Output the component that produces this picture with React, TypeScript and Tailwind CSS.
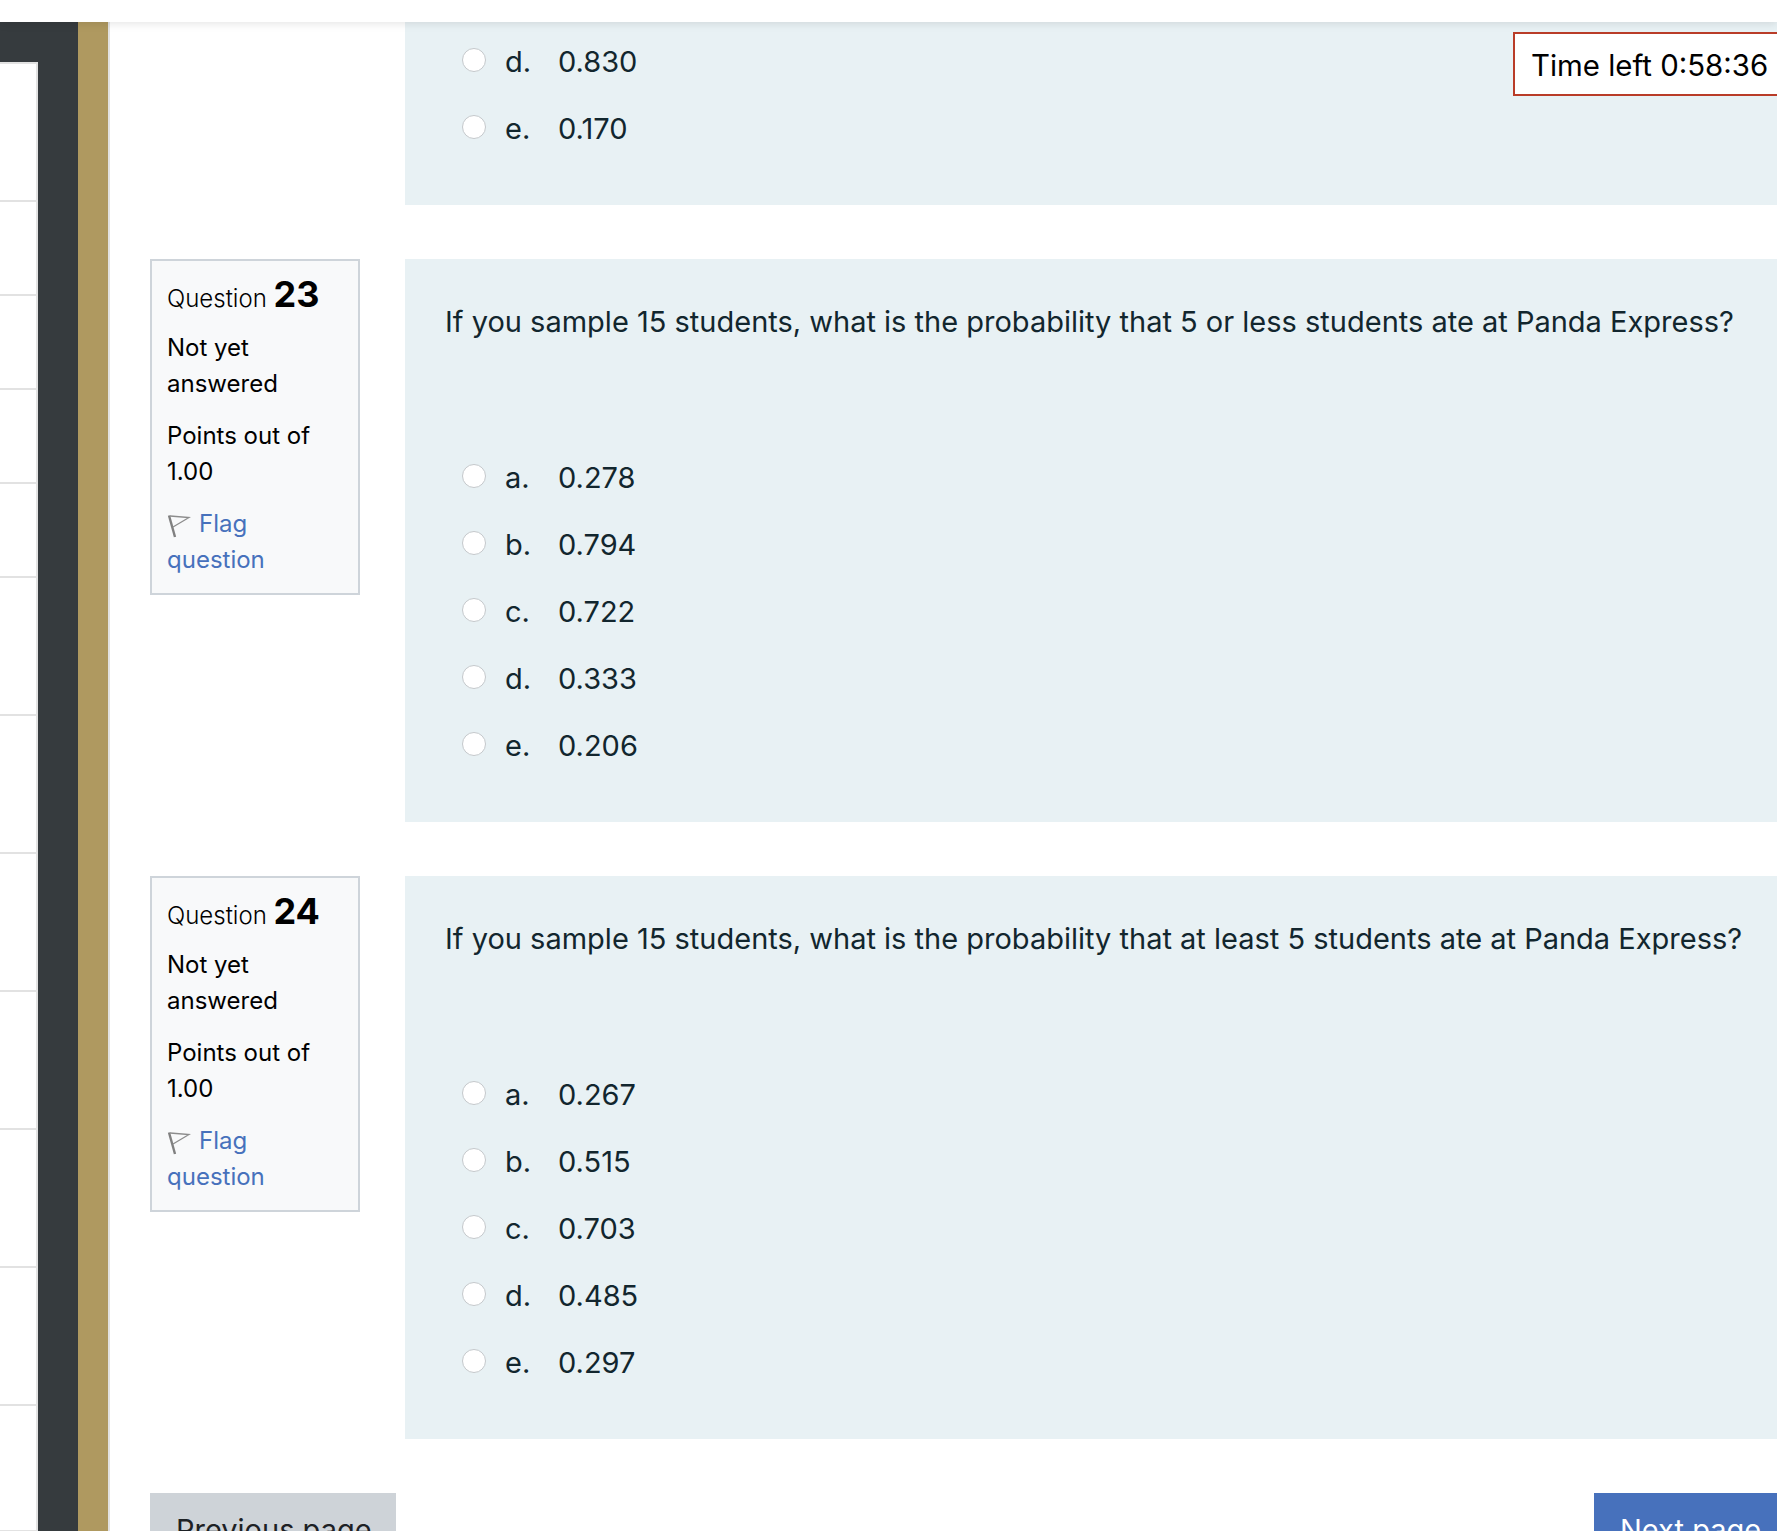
const sidebarRows = [138, 94, 94, 94, 94, 138, 138, 138, 138, 138, 138, 126];

const questions = [
  {
    number: 23,
    text: 'If you sample 15 students, what is the probability that 5 or less students ate at Panda Express?',
    answers: ['0.278', '0.794', '0.722', '0.333', '0.206'],
  },
  {
    number: 24,
    text: 'If you sample 15 students, what is the probability that at least 5 students ate at Panda Express?',
    answers: ['0.267', '0.515', '0.703', '0.485', '0.297'],
  },
];

const letters = ['a.', 'b.', 'c.', 'd.', 'e.'];

const FlagIcon = () => (
  <svg width="24" height="24" viewBox="0 0 24 24" fill="none" className="inline-block align-[-6px] mr-[8px]">
    <path d="M2 1.5 L8 23" stroke="#808080" strokeWidth="2.4" />
    <path d="M3 2 L22 3.5 L6 13" stroke="#8c8c8c" strokeWidth="1.3" />
  </svg>
);

const Answer = ({ letter, value }: { letter: string; value: string }) => (
  <div className="flex items-center h-[67px] pl-[57px]">
    <span className="w-[24px] h-[24px] rounded-full bg-white border border-[#c4c8cb] mb-[3px] shrink-0" />
    <span className="w-[53px] ml-[19px]">{letter}</span>
    <span>{value}</span>
  </div>
);

const Question = ({ number, text, answers }: (typeof questions)[number]) => (
  <div className="flex items-start mb-[54px]">
    <div className="w-[210px] h-[336px] border-2 border-[#ced4da] bg-[#f8f9fa] px-[15px] pt-[15px] text-[24px] leading-[36px] text-[#000] shrink-0">
      <div className="mb-[13px]">
        <span className="font-light">Question </span>
        <span className="text-[36px] font-bold leading-[36px]">{number}</span>
      </div>
      <div className="mb-[16px]">
        Not yet
        <br />
        answered
      </div>
      <div className="mb-[16px]">
        Points out of
        <br />
        1.00
      </div>
      <div className="text-[#4771bc]">
        <FlagIcon />
        Flag
        <br />
        question
      </div>
    </div>
    <div className="flex-1 ml-[45px] h-[563px] bg-[#e8f1f4] text-[#12262e] text-[29px]">
      <div className="pl-[40px] pt-[42px] h-[185px] leading-[42px] whitespace-nowrap">{text}</div>
      {answers.map((value, i) => (
        <Answer key={value} letter={letters[i]} value={value} />
      ))}
    </div>
  </div>
);

export default function App() {
  return (
    <div className="relative h-[1531px] overflow-hidden bg-white flex flex-col font-['Inter',sans-serif]">
      <div className="h-[22px] bg-white shadow-[0_2px_8px_rgba(0,0,0,0.1)] relative z-10 shrink-0" />

      <div className="flex flex-1 min-h-0">
        {/* Sidebar */}
        <div className="w-[110px] shrink-0 flex bg-[#363b3e] pt-[40px] border-r-2 border-[#e2e2e2]">
          <div className="w-[38px] bg-white border-r-2 border-t-2 border-[#e2e2e2] flex flex-col">
            {sidebarRows.map((h, i) => (
              <div key={i} style={{ height: h }} className="border-b-2 border-[#e2e2e2] shrink-0" />
            ))}
          </div>
          <div className="w-[40px]" />
          <div className="w-[30px] bg-[#af9960] -mt-[40px]" />
        </div>

        {/* Main */}
        <div className="flex-1 min-w-0 pl-[40px]">
          <div className="ml-[255px] h-[183px] mb-[54px] bg-[#e8f1f4] text-[#12262e] text-[29px]">
            <div className="pt-[6px]">
              <Answer letter="d." value="0.830" />
              <Answer letter="e." value="0.170" />
            </div>
          </div>

          {questions.map((q) => (
            <Question key={q.number} {...q} />
          ))}

          <div className="flex justify-between">
            <div className="w-[246px] h-[100px] bg-[#ced3d8] text-[#1d2125] text-[29px] pl-[26px] pt-[15px]">Previous page</div>
            <div className="w-[183px] h-[100px] bg-[#4771bc] text-white text-[29px] pl-[26px] pt-[15px]">Next page</div>
          </div>
        </div>
      </div>

      {/* Timer */}
      <div className="absolute top-[32px] left-[1513px] w-[300px] h-[64px] border-2 border-[#b93c28] bg-white text-[#000] text-[29.4px] leading-[60px] pl-[16px] pt-[2px] z-20">
        Time left 0:58:36
      </div>
    </div>
  );
}
